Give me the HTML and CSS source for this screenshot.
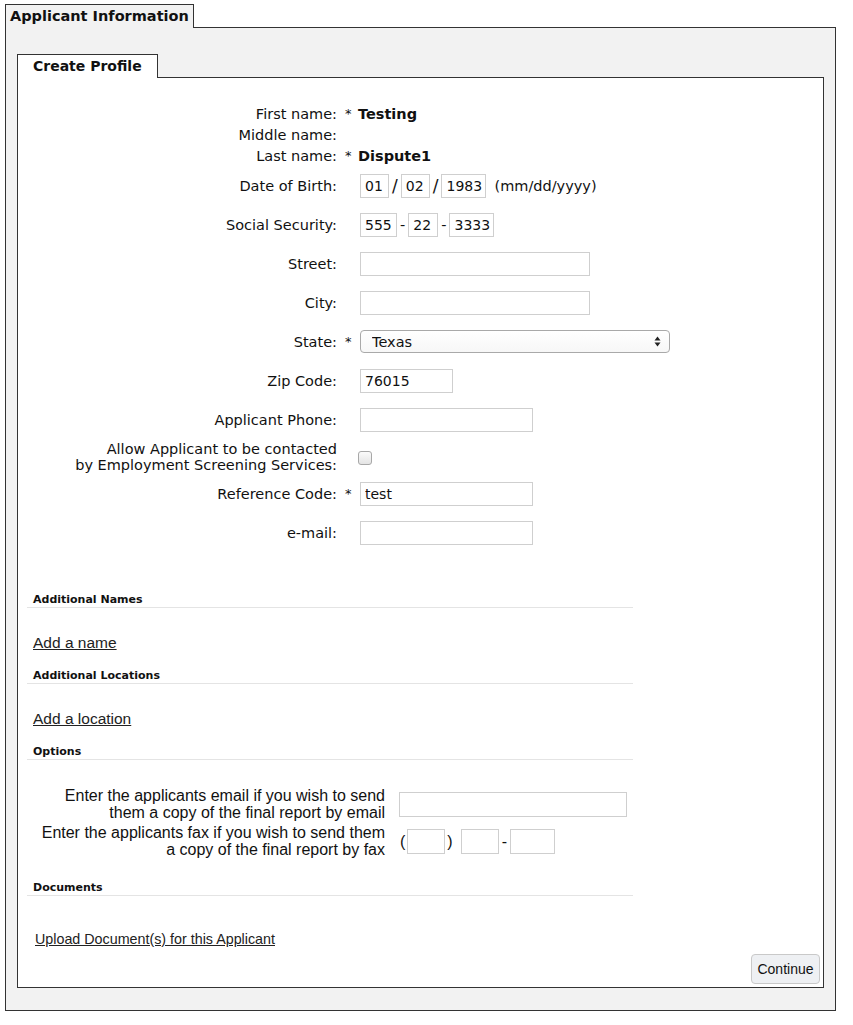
FILE: index.html
```html
<!DOCTYPE html>
<html lang="en">
<head>
    <meta charset="UTF-8">
    <meta name="viewport" content="width=device-width, initial-scale=1.0">
    <title>Applicant Information</title>
    <link rel="stylesheet" href="styles.css">
</head>
<body>
    <div class="tab outer-tab">Applicant Information</div>
    <div class="panel outer-panel">
        <div class="tab inner-tab">Create Profile</div>
        <div class="panel inner-panel">
            <form class="profile">
                <div class="row text-row">
                    <span class="label">First name:</span><span class="mark">*</span><b class="value">Testing</b>
                </div>
                <div class="row text-row">
                    <span class="label">Middle name:</span><span class="mark"></span><span class="value"></span>
                </div>
                <div class="row text-row">
                    <span class="label">Last name:</span><span class="mark">*</span><b class="value">Dispute1</b>
                </div>
                <div class="row">
                    <span class="label">Date of Birth:</span><span class="mark"></span>
                    <div class="split">
                        <input type="text" class="w29" value="01"><span class="slash">/</span>
                        <input type="text" class="w29" value="02"><span class="slash">/</span>
                        <input type="text" class="w45" value="1983">
                        <span class="hint">(mm/dd/yyyy)</span>
                    </div>
                </div>
                <div class="row">
                    <span class="label">Social Security:</span><span class="mark"></span>
                    <div class="split">
                        <input type="text" class="w37" value="555"><span>-</span>
                        <input type="text" class="w30" value="22"><span>-</span>
                        <input type="text" class="w45" value="3333">
                    </div>
                </div>
                <div class="row">
                    <span class="label">Street:</span><span class="mark"></span>
                    <div><input type="text" class="w230"></div>
                </div>
                <div class="row">
                    <span class="label">City:</span><span class="mark"></span>
                    <div><input type="text" class="w230"></div>
                </div>
                <div class="row">
                    <span class="label">State:</span><span class="mark">*</span>
                    <div class="select-wrap">
                        <select class="state">
                            <option>Texas</option>
                        </select>
                        <svg class="select-arrows" width="7" height="11" viewBox="0 0 7 11">
                            <path d="M3.5 0.5 L6.5 4.5 L0.5 4.5 Z M3.5 10.5 L6.5 6.5 L0.5 6.5 Z" fill="#222"/>
                        </svg>
                    </div>
                </div>
                <div class="row">
                    <span class="label">Zip Code:</span><span class="mark"></span>
                    <div><input type="text" class="w93" value="76015"></div>
                </div>
                <div class="row">
                    <span class="label">Applicant Phone:</span><span class="mark"></span>
                    <div><input type="text" class="w173"></div>
                </div>
                <div class="row tall-row">
                    <span class="label">Allow Applicant to be contacted<br>by Employment Screening Services:</span><span class="mark"></span>
                    <div><input type="checkbox" class="check"></div>
                </div>
                <div class="row">
                    <span class="label">Reference Code:</span><span class="mark">*</span>
                    <div><input type="text" class="w173" value="test"></div>
                </div>
                <div class="row">
                    <span class="label">e-mail:</span><span class="mark"></span>
                    <div><input type="text" class="w173"></div>
                </div>
            </form>

            <div class="sections">
                <h4 class="section-title">Additional Names</h4>
                <div class="section-body"><a href="#" class="section-link">Add a name</a></div>

                <h4 class="section-title">Additional Locations</h4>
                <div class="section-body"><a href="#" class="section-link">Add a location</a></div>

                <h4 class="section-title">Options</h4>
                <div class="options">
                    <div class="option-row">
                        <span class="option-label">Enter the applicants email if you wish to send<br>them a copy of the final report by email</span>
                        <div><input type="text" class="w228 tall-input"></div>
                    </div>
                    <div class="option-row">
                        <span class="option-label">Enter the applicants fax if you wish to send them<br>a copy of the final report by fax</span>
                        <div class="fax">
                            <span class="paren">(</span><input type="text" class="w38 tall-input"><span class="paren">)</span>
                            <input type="text" class="w38 tall-input fax-mid"><span class="dash">-</span><input type="text" class="w45 tall-input">
                        </div>
                    </div>
                </div>

                <h4 class="section-title documents">Documents</h4>
                <div class="upload"><a href="#" class="upload-link">Upload Document(s) for this Applicant</a></div>
            </div>

            <div class="actions">
                <button type="button" class="continue">Continue</button>
            </div>
        </div>
    </div>
</body>
</html>
```

FILE: styles.css
```css
*{
    margin: 0;
    padding: 0;
    box-sizing: border-box;
}
body{
    padding: 4px 17px 0 5px;
    font-family: "DejaVu Sans", Verdana, sans-serif;
    font-size: 14.5px;
    color: #111;
    background: #fff;
}

/* tabs */
.tab{
    display: inline-block;
    position: relative;
    z-index: 1;
    height: 24px;
    margin-bottom: -1px;
    padding: 0 5px 1px 5px;
    line-height: 22px;
    font-weight: bold;
    border: 1px solid #333;
    border-bottom: none;
}
.outer-tab{
    background: #f2f2f2;
    padding: 0 4px 1px 4px;
}
.inner-tab{
    background: #fff;
    font-size: 14px;
    padding: 0 15px 1px 15px;
}
.panel{
    border: 1px solid #333;
}
.outer-panel{
    background: #f2f2f2;
    padding: 26px 11px 22px 11px;
}
.inner-panel{
    background: #fff;
    padding: 0 0 3px 0;
}

/* profile form */
.profile{
    padding-top: 25px;
}
.row{
    display: grid;
    grid-template-columns: 319px 23px 1fr;
    align-items: center;
    height: 39px;
}
.text-row{
    height: 21px;
}
.tall-row{
    height: 35px;
    line-height: 16px;
}
.label{
    text-align: right;
}
.mark{
    padding-left: 8px;
    font-size: 13px;
}
.value{
    font-weight: bold;
    margin-left: -2px;
}

input[type="text"]{
    height: 24px;
    padding: 0 2px 0 4px;
    border: 1px solid #cfcfcf;
    font-family: "DejaVu Sans", Verdana, sans-serif;
    font-size: 14px;
    color: #111;
    outline: none;
}
.tall-input{
    height: 25px !important;
}
.w29{ width: 29px; }
.w30{ width: 30px; }
.w37{ width: 37px; }
.w38{ width: 38px; }
.w45{ width: 45px; }
.w93{ width: 93px; }
.w173{ width: 173px; }
.w228{ width: 228px; }
.w230{ width: 230px; }

.split{
    display: flex;
    align-items: center;
    gap: 3px;
}
.split .slash{
    font-size: 17px;
}
.split .hint{
    margin-left: 5px;
}

.select-wrap{
    position: relative;
    width: 310px;
    height: 23px;
}
.state{
    appearance: none;
    -webkit-appearance: none;
    width: 100%;
    height: 23px;
    padding: 0 0 0 11px;
    border: 1px solid #a9a9a9;
    border-radius: 4px;
    background: linear-gradient(#ffffff, #f7f7f7);
    font-family: "DejaVu Sans", Verdana, sans-serif;
    font-size: 14.5px;
    color: #111;
}
.select-arrows{
    position: absolute;
    right: 9px;
    top: 6px;
}

.check{
    appearance: none;
    -webkit-appearance: none;
    display: block;
    width: 14px;
    height: 14px;
    margin: 3px 0 0 -2px;
    border: 1px solid #a8a8a8;
    border-radius: 3px;
    background: linear-gradient(#fbfbfb, #e4e4e4);
}

/* lower sections */
.sections{
    margin: 40px 0 0 9px;
    width: 606px;
}
.section-title{
    font-size: 11px;
    line-height: 15px;
    padding-left: 6px;
    border-bottom: 1px solid #e4e4e4;
    margin-top: 16px;
}
.section-title:first-child{
    margin-top: 0;
}
.section-body{
    margin-top: 26px;
    padding-left: 6px;
    line-height: 18px;
}
.section-link{
    font-family: "Liberation Sans", Arial, sans-serif;
    font-size: 15.5px;
    color: #222;
}

.options{
    margin-top: 28px;
}
.option-row{
    display: grid;
    grid-template-columns: 358px 1fr;
    column-gap: 13px;
    align-items: center;
    margin-bottom: 4px;
}
.option-label{
    text-align: right;
    font-family: "Liberation Sans", Arial, sans-serif;
    font-size: 16px;
    line-height: 16.5px;
}
.option-row .w228{
    margin-left: 1px;
}
.fax{
    display: flex;
    align-items: center;
    font-family: "Liberation Sans", Arial, sans-serif;
    font-size: 16px;
}
.fax .paren{
    margin: 0 2px;
}
.fax .fax-mid{
    margin-left: 6px;
}
.fax .dash{
    margin: 0 3px;
}

.section-title.documents{
    margin-top: 22px;
}
.upload{
    margin-top: 36px;
    padding-left: 8px;
    line-height: 15px;
}
.upload-link{
    font-family: "Liberation Sans", Arial, sans-serif;
    font-size: 14.3px;
    color: #222;
}

.actions{
    display: flex;
    justify-content: flex-end;
    padding: 7px 3px 0 0;
}
.continue{
    width: 69px;
    height: 30px;
    border: 1px solid #c9c9c9;
    border-radius: 4px;
    background: #eef0f3;
    font-family: "Liberation Sans", Arial, sans-serif;
    font-size: 14px;
    color: #111;
}
```
